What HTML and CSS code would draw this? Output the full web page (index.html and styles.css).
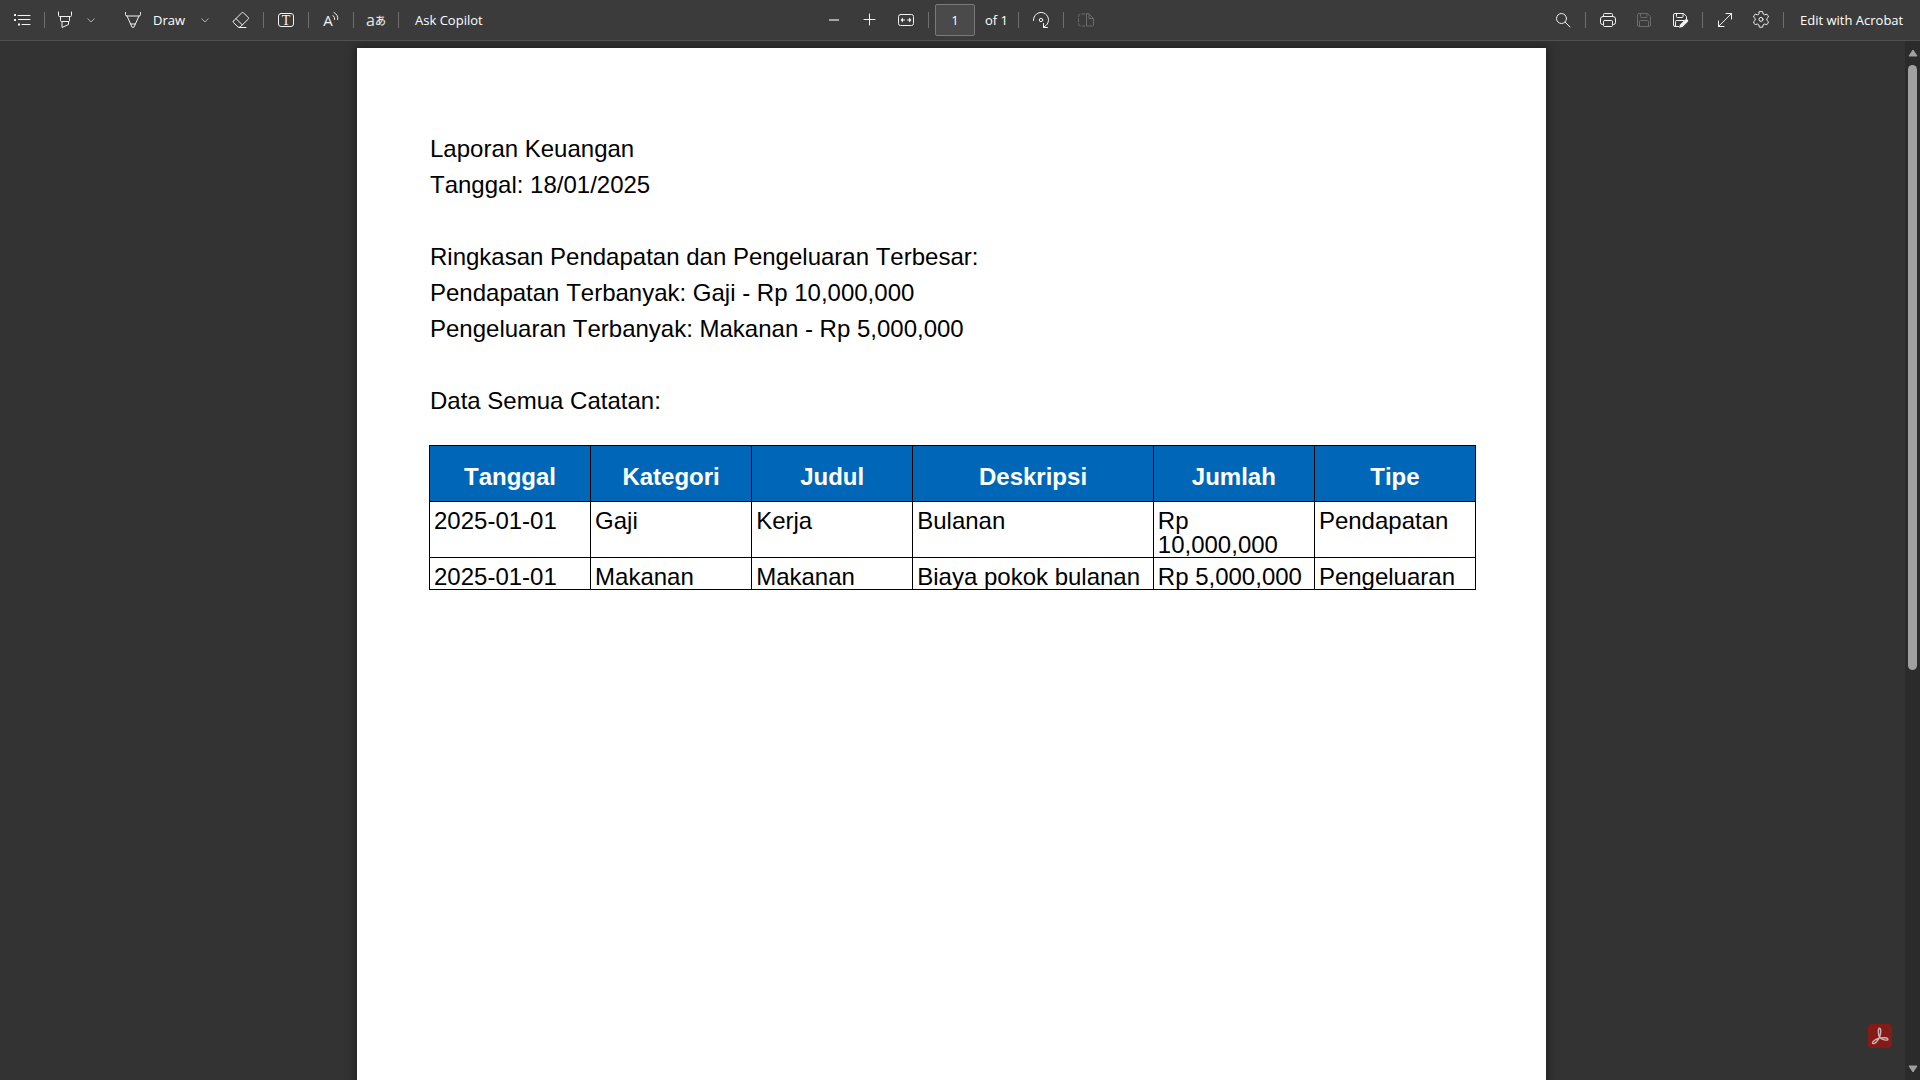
FILE: index.html
```html
<!DOCTYPE html>
<html lang="id">
<head>
<meta charset="utf-8">
<title>Laporan Keuangan</title>
<link rel="stylesheet" href="styles.css">
</head>
<body>
<header class="toolbar" role="toolbar" aria-label="PDF">
  <div class="group">
    <button class="tool" aria-label="Contents"><svg class="icon" viewBox="0 0 20 20"><path d="M6 5.500h12M6.500 9.500h11.500M10 14.500h8"/><path class="solid" d="M2 4h2v2H2zM2 9h2v2H2zM6 13.500h2v2H6z"/></svg></button>
    <span class="divider"></span>
    <button class="tool narrow" aria-label="Highlight"><svg class="icon" viewBox="0 0 20 20"><path d="M3.500 2v3.500a1 1 0 0 0 1 1h11a1 1 0 0 0 1-1V2M5.500 6.500v4a1 1 0 0 0 1 1h7a1 1 0 0 0 1-1v-4M7 11.500v6l6.500-3v-3"/></svg></button>
    <button class="more" aria-label="Highlight options"><svg class="chevron" viewBox="0 0 10 10"><path d="M1.500 3.500 5 7l3.500-3.500"/></svg></button>
    <button class="tool labelled"><svg class="icon" viewBox="0 0 20 20"><path d="M2.500 2.500v2a1.500 1.500 0 0 0 1.500 1.500h12a1.500 1.500 0 0 0 1.500-1.500v-2M4 6l5 11q1 1 2 0l5-11M7.500 14h5"/></svg><span>Draw</span></button>
    <button class="more" aria-label="Draw options"><svg class="chevron" viewBox="0 0 10 10"><path d="M1.500 3.500 5 7l3.500-3.500"/></svg></button>
    <button class="tool erase" aria-label="Erase"><svg class="icon" viewBox="0 0 20 20"><path d="m2.500 11 8.300-8.200a1.200 1.200 0 0 1 1.700 0l4.700 4.700a1.200 1.200 0 0 1 0 1.700L9 17.200H7.200l-4.700-4.600a1.200 1.200 0 0 1 0-1.600zM5 8.600l6.300 6.300M8 17.500h7"/></svg></button>
    <span class="divider"></span>
    <button class="tool" aria-label="Add text"><svg class="icon" viewBox="0 0 20 20"><rect x="2.500" y="3.500" width="15" height="13" rx="2.500"/><text class="serif-letter" x="10" y="15">T</text></svg></button>
    <span class="divider"></span>
    <button class="tool" aria-label="Read aloud"><svg class="icon" viewBox="0 0 20 20"><text class="letter" x="7" y="16">A</text><path d="M12 5.500q2 1.500 1.700 4M13 2.500q4.500 2.500 3.700 7"/></svg></button>
    <span class="divider"></span>
    <button class="tool translate" aria-label="Translate"><span>a</span><span class="kana">あ</span></button>
    <span class="divider"></span>
    <button class="text-button">Ask Copilot</button>
  </div>

  <div class="group">
    <button class="tool" aria-label="Zoom out"><svg class="icon muted" viewBox="0 0 20 20"><path class="heavy" d="M5 10h10"/></svg></button>
    <button class="tool" aria-label="Zoom in"><svg class="icon" viewBox="0 0 20 20"><path d="M4 9.500h11M9.500 4v11"/></svg></button>
    <button class="tool" aria-label="Fit to width"><svg class="icon" viewBox="0 0 20 20"><rect x="2.500" y="4.500" width="15" height="11" rx="2"/><path class="solid" d="m4.500 10 2.500-2.500v2h2v1H7v2zM15.500 10 13 7.500v2h-2v1h2v2z"/></svg></button>
    <span class="divider"></span>
    <label class="pages"><input class="page-input" type="text" value="1" aria-label="Page"><span>of 1</span></label>
    <span class="divider"></span>
    <button class="tool" aria-label="Rotate"><svg class="icon" viewBox="0 0 20 20"><path d="M2.500 10.500a7.500 7.500 0 1 1 12.500 5l-2.500 1.800M12.500 13.500v4h4"/><circle cx="10" cy="10" r="1.700"/></svg></button>
    <span class="divider"></span>
    <button class="tool" aria-label="Page view" disabled><svg class="icon" viewBox="0 0 20 20"><path d="M10.500 4v12h6a1 1 0 0 0 1-1V8.500L13 4zM13 4v4.500h4.500"/><path class="dashed" d="M9 4H4.500a2 2 0 0 0-2 2v8a2 2 0 0 0 2 2H9"/></svg></button>
  </div>

  <div class="group end">
    <button class="tool" aria-label="Search"><svg class="icon" viewBox="0 0 20 20"><circle cx="8.500" cy="8.500" r="5"/><path d="m12.200 12.200 4.800 4.800"/></svg></button>
    <span class="divider"></span>
    <button class="tool" aria-label="Print"><svg class="icon" viewBox="0 0 20 20"><path d="M5.500 6.500v-2a1 1 0 0 1 1-1h7a1 1 0 0 1 1 1v2M5.500 14.500h-1a2 2 0 0 1-2-2V9A2.500 2.500 0 0 1 5 6.500h10A2.500 2.500 0 0 1 17.500 9v3.500a2 2 0 0 1-2 2h-1"/><rect x="5.500" y="10.500" width="9" height="6" rx="1"/></svg></button>
    <button class="tool" aria-label="Save" disabled><svg class="icon" viewBox="0 0 20 20"><path d="M5 3.500h8.500l3 3V15a1.500 1.500 0 0 1-1.500 1.500H5A1.500 1.500 0 0 1 3.500 15V5A1.500 1.500 0 0 1 5 3.500zM6.500 3.500v3a1 1 0 0 0 1 1H12a1 1 0 0 0 1-1v-3M5.500 16.500v-5a1 1 0 0 1 1-1h7a1 1 0 0 1 1 1v5"/></svg></button>
    <button class="tool" aria-label="Save as"><svg class="icon" viewBox="0 0 20 20"><path d="M8.500 16.500H5A1.500 1.500 0 0 1 3.500 15V5A1.500 1.500 0 0 1 5 3.500h8.500l3 3V9M6.500 3.500v3a1 1 0 0 0 1 1H12a1 1 0 0 0 1-1v-3M5.500 16.500v-5a1 1 0 0 1 1-1H14"/><path class="solid" d="m9 17.800.9-3 5.300-5.200a1.500 1.500 0 0 1 2.600 2.200l-5.300 5.200z"/></svg></button>
    <span class="divider"></span>
    <button class="tool" aria-label="Full screen"><svg class="icon" viewBox="0 0 20 20"><path d="M3.500 16.500l13-13M11 3.500h5.500V9M3.500 11v5.500H9"/></svg></button>
    <button class="tool" aria-label="Settings"><svg class="icon" viewBox="0 0 20 20"><path d="M8.300 1.700q1.700-.4 3.400 0l.5 2.300 1.400.8 2.200-.7q1.200 1.300 1.700 2.900l-1.700 1.600v1.600l1.700 1.600q-.5 1.600-1.700 2.900l-2.200-.7-1.400.8-.5 2.300q-1.700.4-3.400 0l-.5-2.300-1.400-.8-2.200.7q-1.200-1.300-1.700-2.900l1.700-1.600V8.600L2.500 7Q3 5.400 4.200 4.100l2.200.7L7.800 4z"/><circle cx="10" cy="9.400" r="2"/></svg></button>
    <span class="divider"></span>
    <button class="text-button edit">Edit with Acrobat</button>
  </div>
</header>

<main class="viewer">
  <div class="canvas">
    <article class="page">
      <p>Laporan Keuangan</p>
      <p>Tanggal: 18/01/2025</p>
      <section class="block">
        <p>Ringkasan Pendapatan dan Pengeluaran Terbesar:</p>
        <p>Pendapatan Terbanyak: Gaji - Rp 10,000,000</p>
        <p>Pengeluaran Terbanyak: Makanan - Rp 5,000,000</p>
      </section>
      <section class="block">
        <p>Data Semua Catatan:</p>
        <table class="records">
          <colgroup><col class="col"><col class="col"><col class="col"><col class="col-wide"><col class="col"><col class="col"></colgroup>
          <thead>
            <tr><th>Tanggal</th><th>Kategori</th><th>Judul</th><th>Deskripsi</th><th>Jumlah</th><th>Tipe</th></tr>
          </thead>
          <tbody>
            <tr><td>2025-01-01</td><td>Gaji</td><td>Kerja</td><td>Bulanan</td><td>Rp 10,000,000</td><td>Pendapatan</td></tr>
            <tr><td>2025-01-01</td><td>Makanan</td><td>Makanan</td><td>Biaya pokok bulanan</td><td>Rp 5,000,000</td><td>Pengeluaran</td></tr>
          </tbody>
        </table>
      </section>
    </article>
  </div>
  <div class="scrollbar" aria-hidden="true">
    <svg class="arrow" viewBox="0 0 10 8"><path d="M5 1 9 7H1z"/></svg>
    <div class="track"><div class="thumb"></div></div>
    <svg class="arrow" viewBox="0 0 10 8"><path d="M1 1h8L5 7z"/></svg>
  </div>
  <button class="acrobat" aria-label="Open in Acrobat"><svg class="acrobat-mark" viewBox="0 0 24 24"><path d="M11.500 13.200C10 10 9.900 4.300 11.500 4.300s1.600 5 .2 8.400c-1.400 3.400-4.900 7.500-6.700 6.900-1.800-.8 1.200-4 5.500-5.200 4.400-1.300 9.500-.9 9.400.9-.2 1.800-5.900.6-8.400-2.100z"/></svg></button>
</main>
</body>
</html>
```

FILE: styles.css
```css
* {
  box-sizing: border-box;
}

body {
  margin: 0;
  height: 100vh;
  display: flex;
  flex-direction: column;
  overflow: hidden;
  background: #333;
  color: #fff;
  font: 13px/20px "Open Sans", "Noto Sans", sans-serif;
}

button {
  padding: 0;
  border: 0;
  background: none;
  color: inherit;
  font: inherit;
}

/* Toolbar */
.toolbar {
  flex: none;
  display: grid;
  grid-template-columns: 1fr auto 1fr;
  height: 41px;
  border-bottom: 1px solid #505050;
  background: #3b3b3b;
}

.group {
  display: flex;
  align-items: center;
  padding-left: 4px;
}

.group:nth-child(2) {
  padding: 0;
}

.end {
  justify-content: flex-end;
  padding: 0 2px 0 0;
}

.divider {
  width: 1px;
  height: 16px;
  margin: 0 4px;
  background: #6e6e6e;
}

.tool {
  width: 36px;
  height: 32px;
  display: flex;
  align-items: center;
  justify-content: center;
}

.narrow {
  width: 32px;
}

.labelled {
  width: auto;
  gap: 10px;
  margin-left: 12px;
  padding: 0 10px;
}

.erase {
  margin-left: 8px;
}

.more {
  width: 20px;
  height: 32px;
  display: flex;
  align-items: center;
  justify-content: center;
}

.text-button {
  padding: 0 12px;
  white-space: nowrap;
}

.edit {
  min-width: 130px;
  text-align: left;
}

.icon {
  width: 20px;
  height: 20px;
  fill: none;
  stroke: #f2f2f2;
  stroke-width: 1;
  stroke-linejoin: round;
  stroke-linecap: round;
}

.icon .solid {
  fill: #f2f2f2;
  stroke: none;
}

.icon .heavy {
  stroke-width: 2;
  stroke-linecap: butt;
}

.icon .dashed {
  stroke-dasharray: 3 2;
}

.muted {
  stroke: #a5a5a5;
}

.tool:disabled .icon {
  stroke: #6b6b6b;
}

.letter,
.serif-letter {
  fill: #f2f2f2;
  stroke: none;
  text-anchor: middle;
  font: 15px "Open Sans", sans-serif;
}

.serif-letter {
  font: 14px "Liberation Serif", serif;
}

.translate {
  color: #e6e6e6;
  font-size: 16px;
}

.kana {
  font: 500 11px/20px "Noto Sans CJK JP", sans-serif;
}

.chevron {
  width: 10px;
  height: 10px;
  fill: none;
  stroke: #b0b0b0;
}

.pages {
  display: flex;
  align-items: center;
  gap: 10px;
  padding: 0 6px 0 2px;
}

.page-input {
  width: 40px;
  height: 32px;
  padding: 0;
  border: 1px solid #7a7a7a;
  border-radius: 2px;
  background: #4a4a4a;
  color: #fff;
  font: inherit;
  text-align: center;
}

/* Document area */
.viewer {
  position: relative;
  flex: 1;
  min-height: 0;
  display: flex;
}

.canvas {
  flex: 1;
  overflow: hidden;
  padding: 7px 2px 0 0;
}

.page {
  max-width: 1189px;
  aspect-ratio: 595 / 842;
  margin: 0 auto;
  padding: 83px 71px 72px 73px;
  background: #fff;
  box-shadow: 0 0 8px 2px #222;
  color: #000;
  font: 24px/36px "Liberation Sans", Arial, sans-serif;
  font-kerning: none;
}

.page p {
  margin: 0;
}

.block {
  margin-top: 36px;
}

/* The grid lines hang one pixel outside the text column. */
.records {
  width: calc(100% + 2px);
  margin: 26px -1px 0;
  border-collapse: collapse;
  table-layout: fixed;
  line-height: 24px;
}

.col-wide {
  width: 23%;
}

.records th,
.records td {
  border: 1px solid #000;
}

.records th {
  height: 56px;
  padding: 7px 0 0;
  background: #0067b8;
  color: #fff;
}

.records td {
  padding: 7px 0 0 4px;
  vertical-align: top;
}

/* Scrollbar */
.scrollbar {
  flex: none;
  width: 15px;
  display: flex;
  flex-direction: column;
  align-items: center;
  gap: 8px;
  padding: 8px 0 7px;
  background: #2b2b2b;
}

.arrow {
  width: 10px;
  height: 8px;
  fill: #a0a0a0;
  stroke: #a0a0a0;
  stroke-linejoin: round;
}

.track {
  flex: 1;
  width: 9px;
}

.thumb {
  height: 61%;
  border-radius: 5px;
  background: #a0a0a0;
}

.acrobat {
  position: absolute;
  right: 28px;
  bottom: 32px;
  width: 24px;
  height: 24px;
  border-radius: 4px;
  background: #851b17;
}

.acrobat-mark {
  display: block;
  width: 24px;
  height: 24px;
  fill: none;
  stroke: #c9b6b5;
  stroke-width: 1.4;
}
```
